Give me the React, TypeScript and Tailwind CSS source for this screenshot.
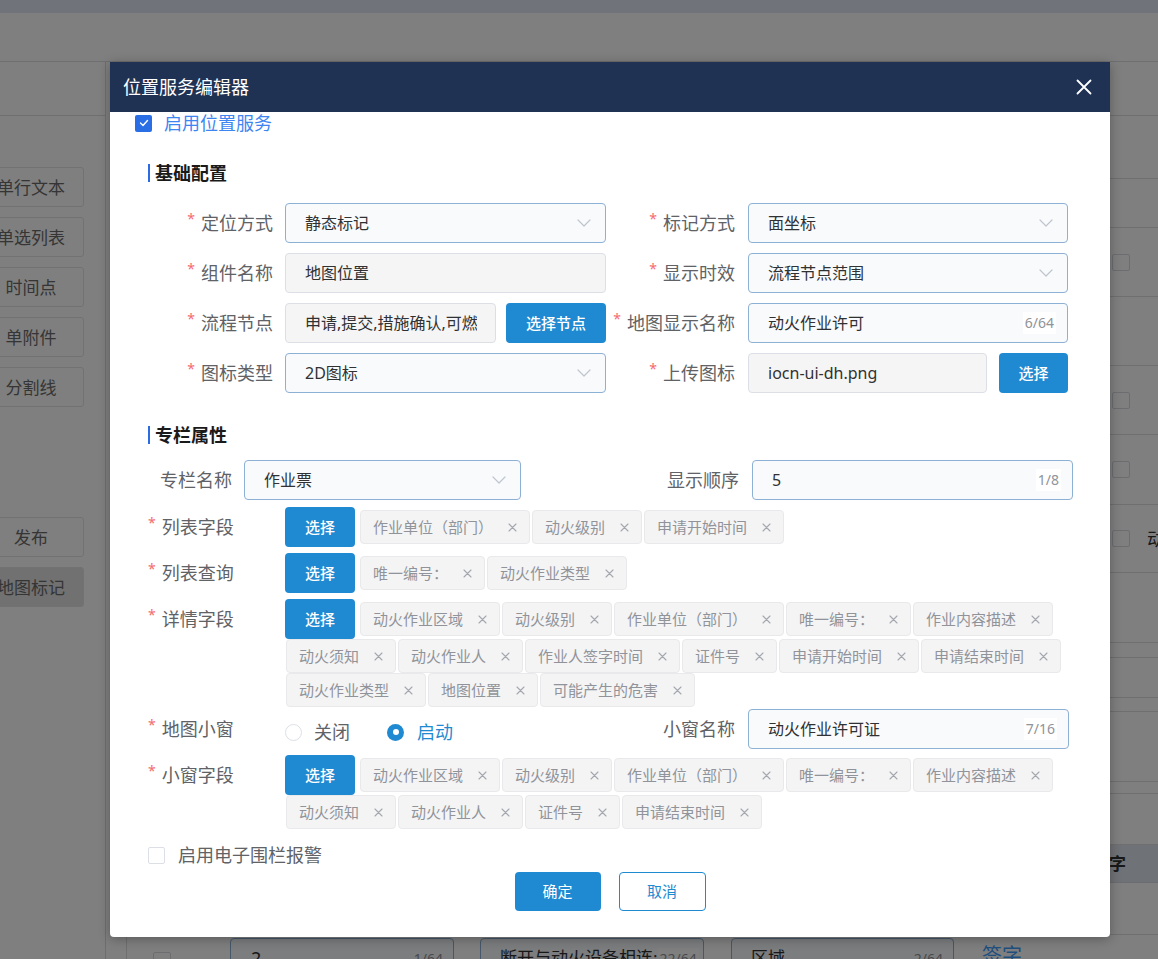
import React from "react";

const Chevron = () => (
  <svg width="14" height="8" viewBox="0 0 14 8" fill="none">
    <path d="M1 1L7 7L13 1" stroke="#c0c4cc" strokeWidth="1.2" strokeLinecap="round" strokeLinejoin="round" />
  </svg>
);

const CloseSmall = () => (
  <svg width="9" height="9" viewBox="0 0 9 9" fill="none">
    <path d="M1 1L8 8M8 1L1 8" stroke="#a4a7ad" strokeWidth="1.1" strokeLinecap="round" />
  </svg>
);

const Star = () => (
  <span className="text-[#f56c6c] text-[14px] leading-none mr-[6px] relative -top-[4px]">*</span>
);

function Select({ text, className }: { text: string; className: string }) {
  return (
    <div
      className={`${className} h-[40px] rounded-[4px] border border-[#8db1d5] bg-[#f8fafc] flex items-center justify-between pl-[19px] pr-[14px]`}
    >
      <span className="text-[16px] text-[#303133] leading-none whitespace-nowrap">{text}</span>
      <Chevron />
    </div>
  );
}

function CountInput({ text, count, className }: { text: string; count: string; className: string }) {
  return (
    <div
      className={`${className} h-[40px] rounded-[4px] border border-[#8db1d5] bg-[#f8fafc] flex items-center justify-between pl-[19px] pr-[11px]`}
    >
      <span className="text-[16px] text-[#303133] leading-none whitespace-nowrap">{text}</span>
      <span className="text-[14px] text-[#909399] leading-[22px] bg-white px-[2px]">{count}</span>
    </div>
  );
}

function Disabled({ text, className }: { text: string; className: string }) {
  return (
    <div
      className={`${className} h-[40px] rounded-[4px] border border-[#dcdfe6] bg-[#f5f5f5] flex items-center pl-[19px] pr-[18px] overflow-hidden`}
    >
      <span className="min-w-0 flex-1 block text-[16px] text-[#303133] leading-[20px] whitespace-nowrap overflow-hidden">{text}</span>
    </div>
  );
}

function Label1({ text, className, star = true }: { text: string; className: string; star?: boolean }) {
  return (
    <div className={`${className} h-[40px] flex items-center justify-end text-[18px] text-[#606266] leading-none whitespace-nowrap`}>
      {star && <Star />}
      {text}
    </div>
  );
}

function Label2({ text, star = true }: { text: string; star?: boolean }) {
  return (
    <div className="w-[137px] shrink-0 h-[40px] flex items-center text-[18px] text-[#606266] leading-none whitespace-nowrap">
      {star ? <Star /> : <span className="w-[12px]" />}
      {text}
    </div>
  );
}

function Btn({ text, className }: { text: string; className: string }) {
  return (
    <div
      className={`${className} h-[40px] rounded-[4px] bg-[#1f8ad1] text-white text-[15px] font-medium flex items-center justify-center leading-none shrink-0`}
    >
      {text}
    </div>
  );
}

function Tag({ text }: { text: string }) {
  return (
    <div className="h-[34px] mx-[1px] pl-[12px] pr-[12px] flex items-center bg-[#f4f4f5] border border-[#e9e9eb] rounded-[4px] text-[15px] text-[#909399] leading-none whitespace-nowrap">
      <span>{text}</span>
      <span className="ml-[15px] flex items-center">
        <CloseSmall />
      </span>
    </div>
  );
}

function TagRow({ label, tags }: { label: string; tags: string[] }) {
  return (
    <div className="flex items-start">
      <Label2 text={label} />
      <div className="w-[785px] flex flex-wrap items-center">
        <Btn text="选择" className="w-[70px] mr-[4px]" />
        {tags.map((t, i) => (
          <Tag key={i} text={t} />
        ))}
      </div>
    </div>
  );
}

function SectionHeader({ text }: { text: string }) {
  return (
    <div className="flex items-center h-[18px]">
      <div className="w-[2px] h-[18px] bg-[#2b6be3]" />
      <span className="ml-[5px] text-[18px] font-bold text-[#1a1a1a] leading-none">{text}</span>
    </div>
  );
}

function SideBtn({ text, active }: { text: string; active?: boolean }) {
  return (
    <div
      className={`-ml-[22px] w-[106px] h-[40px] mb-[10px] border border-[#e4e4e4] rounded-[3px] flex items-center justify-center text-[17px] text-[#6b6b6b] leading-none whitespace-nowrap ${
        active ? "bg-[#e2e2e2]" : "bg-white"
      }`}
    >
      {text}
    </div>
  );
}

function BgCheck() {
  return <div className="w-[18px] h-[17px] rounded-[2px] border border-[#d8dbe0] bg-white shrink-0" />;
}

function Row({ h, children, extra }: { h: string; children?: React.ReactNode; extra?: string }) {
  return (
    <div className={`${h} ${extra ?? ""} border-b border-[#dedede] flex items-center pl-[985px] shrink-0 whitespace-nowrap`}>{children}</div>
  );
}

export default function App() {
  const font = "font-['Noto_Sans','Noto_Sans_CJK_SC',sans-serif]";
  return (
    <div className={`relative w-[1158px] h-[959px] overflow-hidden bg-white ${font}`}>
      {/* underlying page */}
      <div className="h-[13px] bg-[#e0e8f4]" />
      <div className="h-[49px] bg-white border-b border-[#dedede]" />
      <div className="flex h-[897px]">
        {/* sidebar */}
        <div className="w-[106px] shrink-0 border-r border-[#dcdcdc] flex flex-col">
          <div className="h-[54px] border-b border-[#dedede] shrink-0" />
          <div className="mt-[51px] flex flex-col">
            <SideBtn text="单行文本" />
            <SideBtn text="单选列表" />
            <SideBtn text="时间点" />
            <SideBtn text="单附件" />
            <SideBtn text="分割线" />
            <div className="h-[100px]" />
            <SideBtn text="发布" />
            <SideBtn text="地图标记" active />
          </div>
        </div>
        {/* main */}
        <div className="flex-1 pl-[20px] overflow-hidden">
          <div className="border-l border-[#dedede] h-full flex flex-col text-[#303133]">
            <Row h="h-[54px]" />
            <Row h="h-[63px]" />
            <Row h="h-[49px]" />
            <Row h="h-[69px]">
              <BgCheck />
            </Row>
            <Row h="h-[69px]" />
            <Row h="h-[69px]">
              <BgCheck />
            </Row>
            <Row h="h-[70px]">
              <BgCheck />
            </Row>
            <Row h="h-[68px]">
              <BgCheck />
              <span className="ml-[17px] text-[18px] leading-none whitespace-nowrap">动火作业</span>
            </Row>
            <Row h="h-[70px]" />
            <Row h="h-[15px]" />
            <Row h="h-[40px]" />
            <Row h="h-[14px]" />
            <Row h="h-[70px]" />
            <Row h="h-[12px]" />
            <Row h="h-[51px]" />
            <div className="h-[38px] bg-[#dee4ec] border-b border-[#d4d8de] flex items-center pl-[965px] shrink-0 whitespace-nowrap">
              <span className="text-[17px] font-bold leading-none">签字</span>
            </div>
            <Row h="h-[52px]" />
            <div className="flex items-start pt-[3px] whitespace-nowrap">
              <div className="ml-[26px] mt-[14px]">
                <BgCheck />
              </div>
              <div className="ml-[59px] w-[224px] h-[40px] shrink-0 rounded-[4px] border border-[#8db1d5] bg-[#f8fafc] flex items-center justify-between pl-[20px] pr-[10px]">
                <span className="text-[18px]">2</span>
                <span className="text-[14px] text-[#909399]">1/64</span>
              </div>
              <div className="ml-[26px] w-[224px] h-[40px] shrink-0 rounded-[4px] border border-[#8db1d5] bg-[#f8fafc] flex items-center justify-between pl-[19px] pr-[10px] overflow-hidden">
                <span className="text-[17px] whitespace-nowrap">断开与动火设备相连:</span>
                <span className="text-[14px] text-[#909399] bg-white px-[2px]">22/64</span>
              </div>
              <div className="ml-[27px] w-[223px] h-[40px] shrink-0 rounded-[4px] border border-[#8db1d5] bg-[#f8fafc] flex items-center justify-between pl-[19px] pr-[10px]">
                <span className="text-[17px]">区域</span>
                <span className="text-[14px] text-[#909399]">2/64</span>
              </div>
              <span className="ml-[28px] mt-[8px] text-[20px] text-[#409eff] leading-none">签字</span>
            </div>
          </div>
        </div>
      </div>

      {/* mask */}
      <div className="absolute inset-0 bg-black/50" />

      {/* modal */}
      <div className="absolute left-[110px] top-[62px] w-[1000px] h-[875px] bg-white rounded-b-[4px] shadow-[0_2px_12px_rgba(0,0,0,0.3)] flex flex-col">
        <div className="h-[50px] bg-[#1f3253] flex items-center justify-between pl-[13px] pr-[18px] shrink-0">
          <span className="text-[18px] text-white leading-none">位置服务编辑器</span>
          <svg width="16" height="16" viewBox="0 0 16 16" fill="none">
            <path d="M1.5 1.5L14.5 14.5M14.5 1.5L1.5 14.5" stroke="white" strokeWidth="1.8" strokeLinecap="round" />
          </svg>
        </div>

        <div className="pl-[38px]">
          <div className="h-[22px] -ml-[13px] flex items-center">
            <div className="w-[17px] h-[17px] rounded-[2px] bg-[#2a6ee6] flex items-center justify-center">
              <svg width="10" height="8" viewBox="0 0 10 8" fill="none">
                <path d="M1.5 4L4 6.5L8.5 1.5" stroke="white" strokeWidth="1.4" strokeLinecap="round" strokeLinejoin="round" />
              </svg>
            </div>
            <span className="ml-[12px] text-[18px] text-[#3d86f2] leading-none">启用位置服务</span>
          </div>

          <div className="mt-[30px]">
            <SectionHeader text="基础配置" />
          </div>

          <div className="mt-[21px] flex flex-col gap-[10px]">
            <div className="flex">
              <Label1 text="定位方式" className="w-[125px]" />
              <Select text="静态标记" className="ml-[12px] w-[321px]" />
              <Label1 text="标记方式" className="w-[129px]" />
              <Select text="面坐标" className="ml-[13px] w-[320px]" />
            </div>
            <div className="flex">
              <Label1 text="组件名称" className="w-[125px]" />
              <Disabled text="地图位置" className="ml-[12px] w-[321px]" />
              <Label1 text="显示时效" className="w-[129px]" />
              <Select text="流程节点范围" className="ml-[13px] w-[320px]" />
            </div>
            <div className="flex">
              <Label1 text="流程节点" className="w-[125px]" />
              <Disabled text="申请,提交,措施确认,可燃" className="ml-[12px] w-[211px]" />
              <Btn text="选择节点" className="ml-[10px] w-[100px]" />
              <Label1 text="地图显示名称" className="w-[129px]" />
              <CountInput text="动火作业许可" count="6/64" className="ml-[13px] w-[320px]" />
            </div>
            <div className="flex">
              <Label1 text="图标类型" className="w-[125px]" />
              <Select text="2D图标" className="ml-[12px] w-[321px]" />
              <Label1 text="上传图标" className="w-[129px]" />
              <Disabled text="iocn-ui-dh.png" className="ml-[13px] w-[239px]" />
              <Btn text="选择" className="ml-[12px] w-[69px]" />
            </div>
          </div>

          <div className="mt-[33px]">
            <SectionHeader text="专栏属性" />
          </div>

          {/* Row A */}
          <div className="mt-[16px] flex">
            <div className="w-[458px] flex shrink-0">
              <div className="w-[96px] pl-[12px] h-[40px] flex items-center text-[18px] text-[#606266] leading-none">专栏名称</div>
              <Select text="作业票" className="w-[277px]" />
            </div>
            <Label1 text="显示顺序" className="w-[133px]" star={false} />
            <CountInput text="5" count="1/8" className="ml-[13px] w-[321px]" />
          </div>

          <div className="mt-[7px]">
            <TagRow label="列表字段" tags={["作业单位（部门）", "动火级别", "申请开始时间"]} />
          </div>
          <div className="mt-[6px]">
            <TagRow label="列表查询" tags={["唯一编号：", "动火作业类型"]} />
          </div>
          <div className="mt-[6px]">
            <TagRow
              label="详情字段"
              tags={[
                "动火作业区域",
                "动火级别",
                "作业单位（部门）",
                "唯一编号：",
                "作业内容描述",
                "动火须知",
                "动火作业人",
                "作业人签字时间",
                "证件号",
                "申请开始时间",
                "申请结束时间",
                "动火作业类型",
                "地图位置",
                "可能产生的危害",
              ]}
            />
          </div>

          {/* Row E */}
          <div className="mt-[2px] flex items-start h-[40px]">
            <div className="w-[458px] flex shrink-0">
              <Label2 text="地图小窗" />
              <div className="flex items-center h-[34px] mt-[6px]">
                <div className="w-[17px] h-[17px] rounded-full border border-[#dcdfe6] bg-white" />
                <span className="ml-[12px] text-[18px] text-[#606266] leading-none">关闭</span>
                <div className="ml-[37px] w-[17px] h-[17px] rounded-full bg-[#1f8ad1] flex items-center justify-center">
                  <div className="w-[6px] h-[6px] rounded-full bg-white" />
                </div>
                <span className="ml-[13px] text-[18px] text-[#1f8ad1] leading-none">启动</span>
              </div>
            </div>
            <Label1 text="小窗名称" className="w-[129px]" star={false} />
            <CountInput text="动火作业许可证" count="7/16" className="ml-[13px] w-[321px]" />
          </div>

          <div className="mt-[6px]">
            <TagRow
              label="小窗字段"
              tags={[
                "动火作业区域",
                "动火级别",
                "作业单位（部门）",
                "唯一编号：",
                "作业内容描述",
                "动火须知",
                "动火作业人",
                "证件号",
                "申请结束时间",
              ]}
            />
          </div>

          <div className="mt-[18px] h-[16px] flex items-center">
            <div className="w-[17px] h-[17px] rounded-[2px] border border-[#dcdfe6] bg-white" />
            <span className="ml-[13px] text-[18px] text-[#606266] leading-none">启用电子围栏报警</span>
          </div>
        </div>

        <div className="mt-[9px] flex justify-center gap-[18px]">
          <div className="w-[86px] h-[39px] rounded-[4px] bg-[#1f8ad1] text-white text-[15px] flex items-center justify-center leading-none">
            确定
          </div>
          <div className="w-[87px] h-[39px] rounded-[4px] border border-[#1f8ad1] bg-white text-[#1f8ad1] text-[15px] flex items-center justify-center leading-none">
            取消
          </div>
        </div>
      </div>
    </div>
  );
}
